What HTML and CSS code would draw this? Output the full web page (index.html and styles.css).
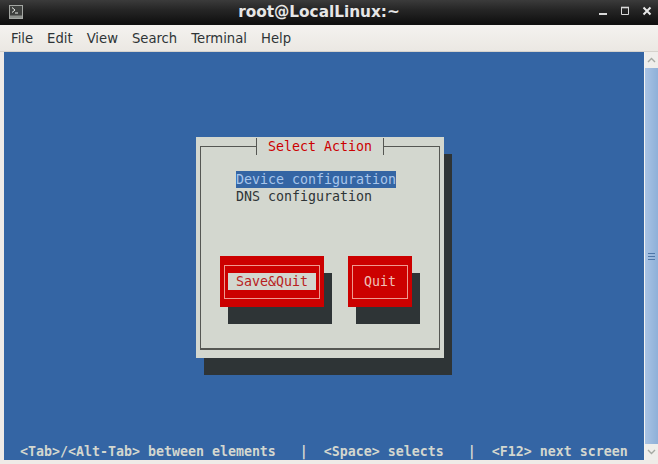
FILE: index.html
```
<!DOCTYPE html>
<html lang="en">
<head>
<meta charset="utf-8">
<title>root@LocalLinux:~</title>
<link rel="stylesheet" href="styles.css">
</head>
<body>
<div class="window">
  <header class="titlebar">
    <svg class="app-icon" width="14" height="14" viewBox="0 0 14 14"><rect x="0.5" y="0.5" width="13" height="13" fill="#3f413f" stroke="#a4a7a3"/><rect x="1" y="10.5" width="12" height="2.5" fill="#8d908c"/><path d="M3 2.5 6 5 3 7.5M6 8h3" fill="none" stroke="#e8eae6" stroke-width="1"/></svg>
    <div class="title">root@LocalLinux:~</div>
    <div class="controls">
      <svg width="10" height="10" viewBox="0 0 10 10"><path d="M1 8h8" stroke="#d8d8d8" stroke-width="2"/></svg>
      <svg width="10" height="10" viewBox="0 0 10 10"><path d="M1.5 1.5h7v7h-7z" fill="none" stroke="#d8d8d8"/><path d="M1 1.5h8" stroke="#d8d8d8" stroke-width="1.6"/></svg>
      <svg width="10" height="10" viewBox="0 0 10 10"><path d="M1.5 1.5l7 7M8.5 1.5l-7 7" stroke="#e8e8e8" stroke-width="2"/></svg>
    </div>
  </header>
  <nav class="menubar">
    <span>File</span><span>Edit</span><span>View</span><span>Search</span><span>Terminal</span><span>Help</span>
  </nav>
  <main class="content">
    <section class="terminal">
      <div class="dialog">
        <div class="frame">
          <div class="legend">Select Action</div>
          <ul class="list">
            <li class="selected">Device configuration</li>
            <li>DNS configuration</li>
          </ul>
          <div class="buttons">
            <div class="btn btn-save"><div class="btn-inner"><span class="btn-label focus">Save&amp;Quit</span></div></div>
            <div class="btn btn-quit"><div class="btn-inner"><span class="btn-label">Quit</span></div></div>
          </div>
        </div>
      </div>
      <div class="status">  &lt;Tab&gt;/&lt;Alt-Tab&gt; between elements   |  &lt;Space&gt; selects   |  &lt;F12&gt; next screen</div>
    </section>
    <aside class="scrollbar">
      <div class="arrow"><svg width="9" height="6" viewBox="0 0 9 6"><path d="M1 5l3.5-3.5L8 5" fill="none" stroke="#a5a9a3" stroke-width="1.4"/></svg></div>
      <div class="thumb"><i></i><i></i><i></i></div>
      <div class="arrow"><svg width="9" height="6" viewBox="0 0 9 6"><path d="M1 1l3.5 3.5L8 1" fill="none" stroke="#a5a9a3" stroke-width="1.4"/></svg></div>
    </aside>
  </main>
</div>
</body>
</html>
```
FILE: styles.css
```
* { box-sizing: border-box; margin: 0; padding: 0; }
html, body { width: 658px; height: 464px; overflow: hidden; background: #efebe7; }
.window { width: 658px; height: 464px; display: flex; flex-direction: column; }
.titlebar {
  height: 25px; flex: none; display: flex; align-items: center; position: relative;
  padding-left: 9px;
  background: linear-gradient(#3b3b3b 0, #262626 40%, #0f0f0f 100%);
  border-bottom: 1px solid #111;
}
.app-icon { flex: none; margin-top: -1px; }
.title {
  position: absolute; left: 0; width: 638px; text-align: center; top: 3px;
  font: bold 15.3px/18px "DejaVu Sans", sans-serif; color: #e6e6e6;
}
.controls { display: flex; gap: 12px; margin-left: auto; padding-right: 6px; align-items: center; margin-top: -2px; }
.menubar {
  height: 27px; flex: none; display: flex; align-items: center; gap: 14px;
  padding-left: 11px; background: linear-gradient(#f4f2ef, #ebe8e3);
  border-bottom: 1px solid #d5d2cc;
  font: 13.2px "DejaVu Sans", sans-serif; color: #2e3436;
}
.content { flex: none; height: 408px; display: flex; padding-left: 4px; }
.terminal {
  width: 640px; height: 408px; display: flex; flex-direction: column;
  background: #3465a4; padding: 85px 0 0 192px;
  font: 13.29px/17px "DejaVu Sans Mono", monospace; color: #2e3436;
}
.dialog {
  width: 248px; height: 221px; padding: 9px 4px 8px; flex: none;
  background: #d3d7cf; box-shadow: 8px 17px 0 #2e3436;
}
.frame {
  height: 204px; position: relative; border: 1px solid #555753; border-bottom-width: 2px;
  padding: 24px 0 0 35px;
}
.legend {
  position: absolute; top: -9px; left: 55px; width: 128px; height: 17px; text-align: center;
  background: #d3d7cf; color: #cc0000;
  border-left: 1px solid #555753; border-right: 1px solid #555753;
}
.list { list-style: none; width: 160px; height: 85px; }
.list li { white-space: pre; }
.selected { background: #3465a4; color: #a8c6ec; }
.buttons { display: flex; gap: 24px; margin-left: -16px; }
.btn {
  height: 51px; padding: 9px 4px 8px; background: #cc0000; box-shadow: 8px 17px 0 #2e3436;
  color: #f0c0b8;
}
.btn-save { width: 104px; }
.btn-quit { width: 64px; }
.btn-inner {
  height: 34px; border: 1px solid #ef9a90; padding: 7px 3px 0; text-align: center;
}
.btn-label { display: block; height: 17px; margin-top: 0; }
.focus { background: #d3d7cf; color: #b82020; }
.status {
  margin: auto 0 0 -192px; height: 17px; width: 640px; white-space: pre;
  font-weight: bold; color: #d3d7cf;
}
.scrollbar {
  width: 14px; display: flex; flex-direction: column;
  background: #e4e2de; border-left: 1px solid #f4f4f2;
}
.arrow { height: 16px; flex: none; display: flex; align-items: center; justify-content: center; background: #efeeeb; }
.thumb {
  flex: 1; display: flex; flex-direction: column; justify-content: center; align-items: center; gap: 2px;
  background: linear-gradient(90deg, #a9c3e4, #8fb0d8);
}
.thumb i { display: block; width: 7px; height: 1px; background: #4f77a8; }
```
